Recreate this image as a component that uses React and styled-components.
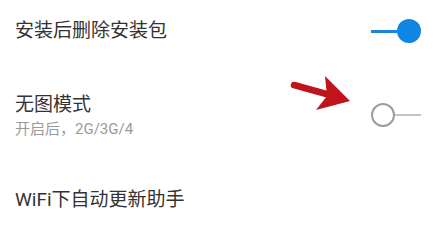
import React from 'react';
import styled, { createGlobalStyle } from 'styled-components';

const GlobalStyle = createGlobalStyle`
  html, body {
    margin: 0;
    padding: 0;
    background: #ffffff;
  }
  body {
    font-family: Roboto, "Noto Sans CJK SC", sans-serif;
    overflow: hidden;
  }
`;

const Page = styled.div`
  position: relative;
  width: 437px;
  height: 243px;
  background: #ffffff;
`;

const Row = styled.div`
  display: flex;
  align-items: center;
  justify-content: space-between;
  height: ${({ height }) => height}px;
  padding: 0 16px 0 15px;
  box-sizing: border-box;
`;

const TextBlock = styled.div`
  display: flex;
  flex-direction: column;
`;

const Title = styled.div`
  font-size: 19px;
  line-height: 24px;
  color: #333333;
  white-space: nowrap;
`;

const Summary = styled.div`
  width: 119px;
  overflow: hidden;
  font-size: 15px;
  line-height: 24px;
  color: #9a9a9a;
  white-space: nowrap;
`;

const Switch = styled.div`
  display: flex;
  align-items: center;
  flex-direction: ${({ on }) => (on ? 'row' : 'row-reverse')};
  width: 50px;
  height: 26px;
  margin-top: ${({ shift }) => shift || 0}px;
`;

const Track = styled.div`
  flex: 1;
  height: ${({ on }) => (on ? 3 : 2)}px;
  background: ${({ on }) => (on ? '#1a86df' : '#c4c4c4')};
`;

const Thumb = styled.div`
  width: 24px;
  height: 24px;
  border-radius: 50%;
  box-sizing: border-box;
  background: ${({ on }) => (on ? '#0f86e3' : '#ffffff')};
  border: ${({ on }) => (on ? 'none' : '2.5px solid #9d9d9d')};
`;

const Arrow = styled.svg`
  position: absolute;
  left: 0;
  top: 0;
  pointer-events: none;
`;

const Toggle = ({ on, shift }) => (
  <Switch on={on ? 1 : 0} shift={shift}>
    <Track on={on ? 1 : 0} />
    <Thumb on={on ? 1 : 0} />
  </Switch>
);

export default function App() {
  return (
    <Page>
      <GlobalStyle />
      <Row height={62}>
        <Title>安装后删除安装包</Title>
        <Toggle on />
      </Row>
      <Row height={110}>
        <TextBlock>
          <Title>无图模式</Title>
          <Summary>开启后，2G/3G/4G网络下不显示图片</Summary>
        </TextBlock>
        <Toggle shift={-4} />
      </Row>
      <Row height={56}>
        <Title>WiFi下自动更新助手</Title>
      </Row>
      <Arrow width="437" height="243" viewBox="0 0 437 243">
        <line x1="294" y1="85" x2="330" y2="95" stroke="#c0141c" strokeWidth="6.5" strokeLinecap="round" />
        <polygon points="325,76 350,101 316,110 327,96" fill="#c0141c" />
      </Arrow>
    </Page>
  );
}
